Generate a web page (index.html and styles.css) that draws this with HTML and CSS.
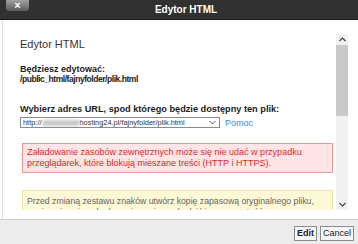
FILE: index.html
```html
<!DOCTYPE html>
<html lang="pl">
<head>
    <meta charset="UTF-8">
    <meta name="viewport" content="width=device-width, initial-scale=1.0">
    <title>Edytor HTML</title>
    <link rel="stylesheet" href="styles.css">
</head>
<body>
    <div class="dialog">
        <div class="titlebar">
            <button class="close">&times;</button>
            <span class="title">Edytor HTML</span>
        </div>
        <div class="panel">
            <div class="scroll">
                <div class="content">
                    <h1>Edytor HTML</h1>
                    <p class="label">Będziesz edytować:<br><span class="path">/public_html/fajnyfolder/plik.html</span></p>
                    <p class="label url-label">Wybierz adres URL, spod którego będzie dostępny ten plik:</p>
                    <div class="url-row">
                        <div class="select">
                            <span class="url">http://<span class="blur"></span>hosting24.pl/fajnyfolder/plik.html</span>
                            <svg class="caret" width="7" height="5" viewBox="0 0 7 5"><polyline points="0.5,1 3.5,4 6.5,1" fill="none" stroke="#555" stroke-width="1"/></svg>
                        </div>
                        <a class="help" href="#">Pomoc</a>
                    </div>
                    <div class="alert error">Załadowanie zasobów zewnętrznych może się nie udać w przypadku przeglądarek, które blokują mieszane treści (HTTP i HTTPS).</div>
                    <div class="alert warning">Przed zmianą zestawu znaków utwórz kopię zapasową oryginalnego pliku, ponieważ zmiana kodowania może uszkodzić jego zawartość.</div>
                </div>
                <div class="scrollbar">
                    <div class="sb-btn"><svg width="7" height="5" viewBox="0 0 7 5"><polyline points="0.5,4 3.5,1 6.5,4" fill="none" stroke="#444" stroke-width="1.2"/></svg></div>
                    <div class="sb-thumb"></div>
                    <div class="sb-track"></div>
                    <div class="sb-btn"><svg width="7" height="5" viewBox="0 0 7 5"><polyline points="0.5,1 3.5,4 6.5,1" fill="none" stroke="#444" stroke-width="1.2"/></svg></div>
                </div>
            </div>
        </div>
        <div class="footer">
            <button class="btn btn-default">Edit</button>
            <button class="btn">Cancel</button>
        </div>
    </div>
</body>
</html>
```

FILE: styles.css
```css
body {
    margin: 0;
    padding: 0;
    font-family: "Liberation Sans", Arial, sans-serif;
    background-color: #fff;
}
.dialog {
    width: 358px;
    height: 244px;
    display: flex;
    flex-direction: column;
}
.titlebar {
    height: 19px;
    background-color: #313131;
    border-bottom: 1px solid #1c1c1c;
    display: flex;
    align-items: flex-start;
}
.close {
    margin-left: 6px;
    width: 23px;
    height: 11px;
    padding: 0;
    border: none;
    border-radius: 0 0 3px 3px;
    background: linear-gradient(#a0a0a0, #5c5c5c);
    color: #fff;
    font-family: "Liberation Sans", Arial, sans-serif;
    font-weight: bold;
    font-size: 11px;
    line-height: 11px;
}
.title {
    flex: 1;
    text-align: center;
    margin-left: -15px;
    color: #fff;
    font-weight: bold;
    font-size: 10px;
    line-height: 19px;
}
.panel {
    height: 185px;
    border-left: 1px solid #ddd;
    margin-left: 2px;
    padding: 14px 10px 0 0;
}
.scroll {
    display: flex;
    height: 176px;
    overflow: hidden;
}
.content {
    flex: 1;
    padding: 0 3px 0 17px;
    color: #333;
}
h1 {
    margin: 4px 0 0;
    font-size: 11px;
    line-height: 13px;
    font-weight: normal;
    color: #333;
}
.label {
    margin: 13px 0 0;
    font-size: 9px;
    line-height: 10px;
    font-weight: bold;
    color: #222;
}
.path {
    font-size: 8.5px;
    letter-spacing: -0.45px;
}
.url-label {
    margin-top: 20px;
    font-size: 9.2px;
}
.url-row {
    display: flex;
    align-items: center;
    margin-top: 3px;
    gap: 5px;
}
.select {
    width: 194px;
    height: 9px;
    border: 1px solid #8a8a8a;
    padding: 0 2px;
    display: flex;
    align-items: center;
    justify-content: space-between;
    font-size: 7.4px;
    color: #333;
}
.url {
    white-space: nowrap;
    overflow: hidden;
}
.blur {
    display: inline-block;
    width: 38px;
    height: 6px;
    background-color: #c8c8c8;
    border-radius: 3px;
    filter: blur(1.5px);
    vertical-align: -1px;
}
.caret {
    margin-right: 1px;
}
.help {
    color: #3b8ad8;
    text-decoration: none;
    font-size: 9px;
}
.alert {
    margin-top: 15px;
    margin-left: 2px;
    padding: 3px 6px 3px 4px;
    font-size: 9px;
    line-height: 11px;
}
.error {
    background-color: #ffe5e5;
    border: 1px solid #f29696;
    color: #e3262a;
}
.warning {
    margin-top: 17px;
    background-color: #fdf8d6;
    border: 1px solid #efe4a6;
    color: #666;
    padding-top: 5px;
    font-size: 8.7px;
}
.scrollbar {
    width: 12px;
    display: flex;
    flex-direction: column;
    background-color: #f1f1f1;
}
.sb-btn {
    height: 11px;
    display: flex;
    align-items: center;
    justify-content: center;
}
.sb-thumb {
    height: 71px;
    background-color: #c9c9c9;
}
.sb-track {
    flex: 1;
}
.footer {
    flex: 1;
    border-top: 1px solid #d0d0d0;
    background-color: #ececec;
    display: flex;
    justify-content: flex-end;
    align-items: flex-start;
    gap: 3px;
    padding: 6px 4px 0 0;
}
.btn {
    height: 15px;
    padding: 0 2px;
    border: 1px solid #8c8c8c;
    background-color: #f6f6f6;
    color: #222;
    font-family: "Liberation Sans", Arial, sans-serif;
    font-size: 9px;
    line-height: 13px;
}
.btn-default {
    font-weight: bold;
}
```
